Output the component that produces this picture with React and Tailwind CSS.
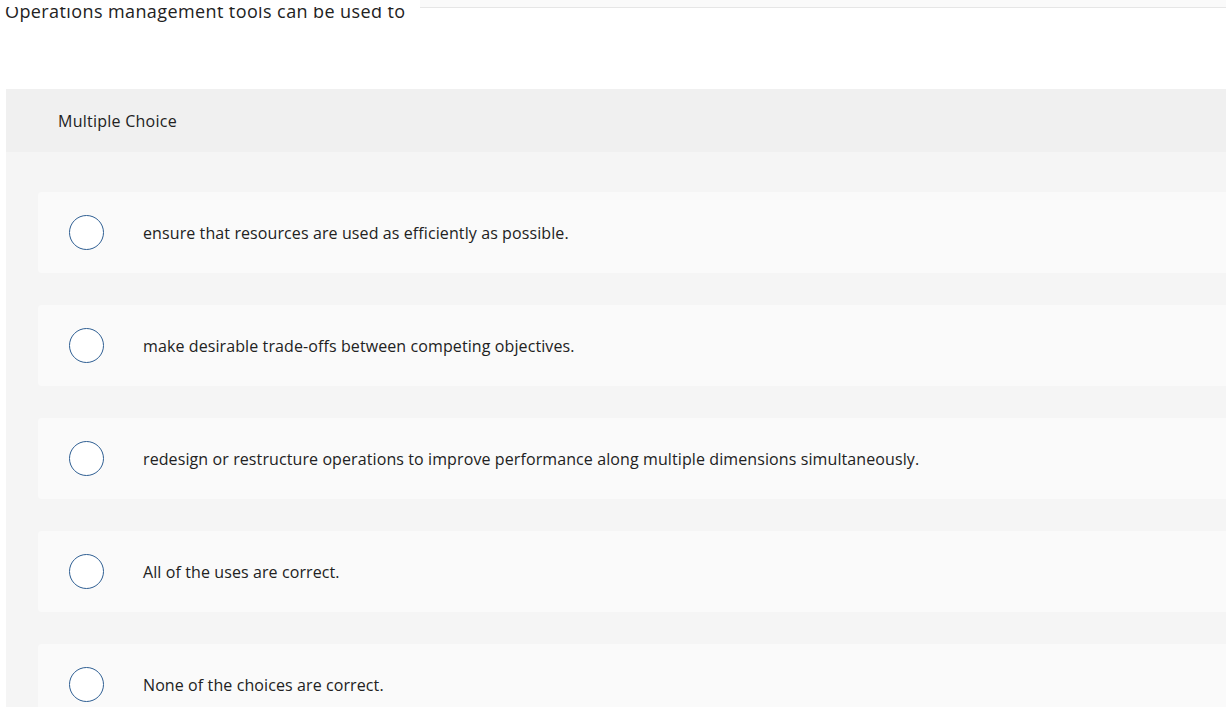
import React from 'react';

const choices = [
  'ensure that resources are used as efficiently as possible.',
  'make desirable trade-offs between competing objectives.',
  'redesign or restructure operations to improve performance along multiple dimensions simultaneously.',
  'All of the uses are correct.',
  'None of the choices are correct.',
];

function Radio() {
  return (
    <span className="block w-[35px] h-[35px] shrink-0 rounded-full border-[1.5px] border-[#2f5f93] bg-white"></span>
  );
}

export default function App() {
  return (
    <div className="w-[1226px] h-[707px] overflow-hidden bg-white text-[#1c1c1c] font-['Open_Sans','Liberation_Sans',sans-serif]">
      {/* scrolled question, partly hidden under the top bar */}
      <div className="relative h-[89px]">
        <div className="absolute left-0 top-[-2px] pl-[5px] text-[18px] leading-[26px] tracking-[0.4px] text-[#222] whitespace-nowrap">
          Operations management tools can be used to
        </div>
        <div className="absolute left-0 right-0 top-0 flex z-10">
          <div className="w-[420px] h-[7px] bg-white"></div>
          <div className="flex-1 h-[8px] bg-[#fafafa] border-b border-[#e6e6e6]"></div>
        </div>
      </div>

      <div className="ml-[6px] w-[1260px] bg-[#f5f5f5]">
        <div className="h-[63px] bg-[#f0f0f0] flex items-center pl-[52px] text-[16px] tracking-[0.25px] text-[#222]">
          Multiple Choice
        </div>
        <div className="pt-[40px] pl-[32px] flex flex-col gap-[32px]">
          {choices.map((c, i) => (
            <div key={i} className="h-[81px] rounded-[4px] bg-[#fafafa] flex items-center pl-[31px]">
              <Radio />
              <span className="ml-[39px] text-[16px] tracking-[0.1px] text-[#222]">{c}</span>
            </div>
          ))}
        </div>
      </div>
    </div>
  );
}
